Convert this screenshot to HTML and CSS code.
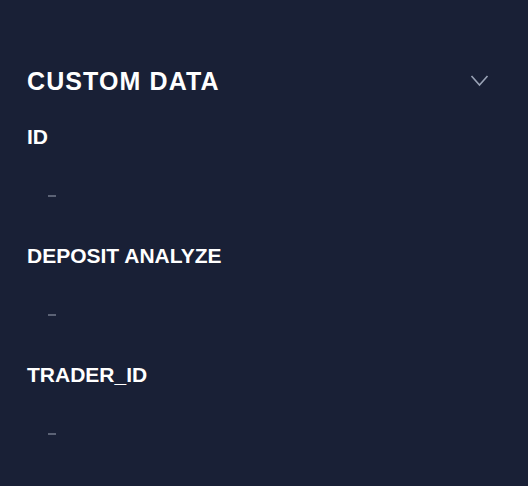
FILE: index.html
```html
<!DOCTYPE html>
<html>
<head>
<meta charset="utf-8">
<link rel="stylesheet" href="styles.css">
</head>
<body>
<div class="panel">
  <div class="header">
    <h2 class="title">CUSTOM DATA</h2>
    <svg class="chevron" width="19" height="12" viewBox="0 0 19 12"><path d="M1.5 1 L9.5 10 L17.5 1" fill="none" stroke="#9aa3b6" stroke-width="1.6"/></svg>
  </div>
  <div class="field">
    <div class="label">ID</div>
    <div class="value"><span class="dash"></span></div>
  </div>
  <div class="field">
    <div class="label">DEPOSIT ANALYZE</div>
    <div class="value"><span class="dash"></span></div>
  </div>
  <div class="field">
    <div class="label">TRADER_ID</div>
    <div class="value"><span class="dash"></span></div>
  </div>
</div>
</body>
</html>
```
FILE: styles.css
```css
html, body {
  margin: 0;
  padding: 0;
  background: #192036;
  height: 100%;
}
body {
  font-family: "Liberation Sans", Arial, sans-serif;
  color: #ffffff;
}
.panel {
  padding: 66px 39px 0 27px;
}
.header {
  display: flex;
  align-items: center;
  justify-content: space-between;
  height: 30px;
}
.title {
  margin: 0;
  font-size: 25px;
  font-weight: 700;
  letter-spacing: 1.1px;
  line-height: 30px;
}
.chevron {
  display: block;
}
.field {
  display: flex;
  flex-direction: column;
}
.header + .field {
  margin-top: 29px;
}
.label {
  font-size: 21px;
  font-weight: 700;
  letter-spacing: 0;
  line-height: 24px;
  height: 24px;
}
.value {
  height: 95px;
  padding-left: 21px;
  box-sizing: border-box;
  padding-top: 46px;
}
.dash {
  display: block;
  width: 8px;
  height: 2px;
  background: #5b6275;
}
```
